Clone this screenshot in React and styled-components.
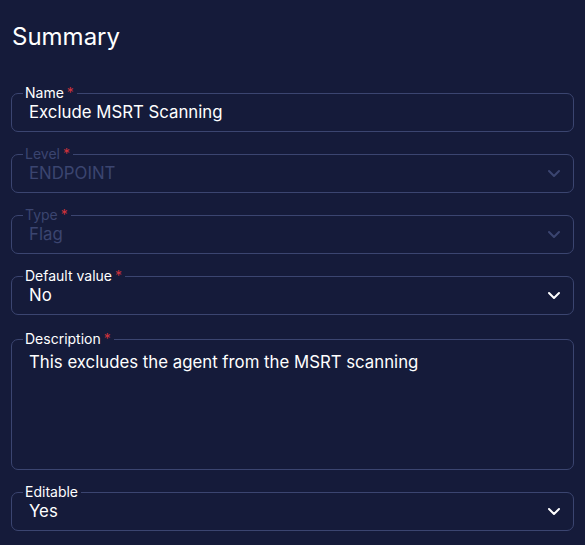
import React from 'react';
import styled, { createGlobalStyle } from 'styled-components';

const GlobalStyle = createGlobalStyle`
  html, body {
    margin: 0;
    padding: 0;
    background: #151b3a;
    font-family: Inter, "Noto Sans", sans-serif;
  }
`;

const Page = styled.div`
  width: 585px;
  height: 545px;
  box-sizing: border-box;
  padding: 19px 11px 0 11px;
  background: #151b3a;
  color: #ffffff;
`;

const Title = styled.h2`
  margin: 0 0 0 1px;
  font-size: 24px;
  font-weight: 400;
  line-height: 36px;
`;

const Form = styled.div`
  display: flex;
  flex-direction: column;
  gap: 14px;
  margin-top: 30px;
`;

const Field = styled.fieldset`
  margin: ${p => (p.$multiline ? '2px 0 0 0' : '0')};
  padding: 0 12px 0 17px;
  border: 1px solid #3b4570;
  border-radius: 7px;
  min-width: 0;
`;

const Legend = styled.legend`
  margin-left: -6px;
  padding: 0 3px 0 2px;
  font-size: 14px;
  line-height: 16px;
  color: ${p => (p.$disabled ? '#3b4570' : '#ffffff')};
`;

const Required = styled.span`
  color: #d0323a;
  margin-left: 3px;
`;

const Content = styled.div`
  height: ${p => (p.$multiline ? 122 : 30)}px;
  display: flex;
  align-items: flex-start;
  justify-content: space-between;
`;

const Value = styled.div`
  font-size: 16.8px;
  line-height: 22px;
  margin-top: ${p => (p.$multiline ? '4px' : '0')};
  color: ${p => (p.$disabled ? '#3b4570' : '#ffffff')};
`;

const Chevron = styled.svg`
  width: 14px;
  height: 14px;
  margin-top: 4px;
  flex-shrink: 0;
  color: ${p => (p.$disabled ? '#3b4570' : '#ffffff')};
`;

const ChevronDown = ({ disabled }) => (
  <Chevron $disabled={disabled} viewBox="0 0 14 14" fill="none">
    <path d="M2 5l5 5 5-5" stroke="currentColor" strokeWidth="2" strokeLinecap="round" strokeLinejoin="round" />
  </Chevron>
);

const fields = [
  { label: 'Name', value: 'Exclude MSRT Scanning', required: true },
  { label: 'Level', value: 'ENDPOINT', required: true, disabled: true, select: true },
  { label: 'Type', value: 'Flag', required: true, disabled: true, select: true },
  { label: 'Default value', value: 'No', required: true, select: true },
  { label: 'Description', value: 'This excludes the agent from the MSRT scanning', required: true, multiline: true },
  { label: 'Editable', value: 'Yes', select: true },
];

export default function App() {
  return (
    <Page>
      <GlobalStyle />
      <Title>Summary</Title>
      <Form>
        {fields.map(f => (
          <Field key={f.label} $multiline={f.multiline}>
            <Legend $disabled={f.disabled}>
              {f.label}
              {f.required && <Required>*</Required>}
            </Legend>
            <Content $multiline={f.multiline}>
              <Value $disabled={f.disabled} $multiline={f.multiline}>{f.value}</Value>
              {f.select && <ChevronDown disabled={f.disabled} />}
            </Content>
          </Field>
        ))}
      </Form>
    </Page>
  );
}
